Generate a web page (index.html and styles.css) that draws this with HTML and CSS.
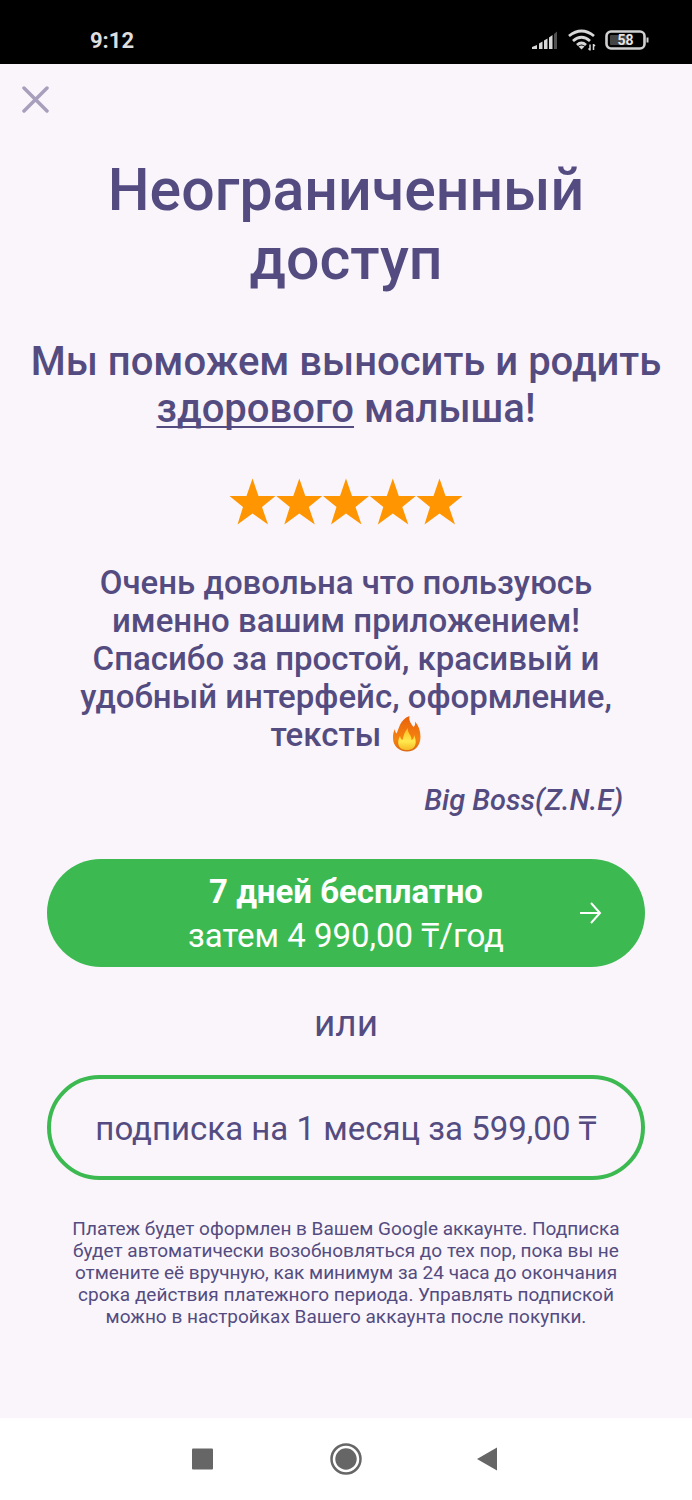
FILE: index.html
```html
<!DOCTYPE html>
<html lang="ru">
<head>
<meta charset="utf-8">
<meta name="viewport" content="width=device-width, initial-scale=1">
<title>Неограниченный доступ</title>
<link rel="stylesheet" href="styles.css">
</head>
<body>
<header class="status">
  <time class="clock">9:12</time>
  <div class="indicators">
    <svg width="28" height="20" viewBox="0 0 28 20" aria-hidden="true">
      <g fill="#d8d8d8"><path d="M1 19v-2l5-2v4zM8 13.500l3.500-2v7.500H8zM13 10.500l3.500-2V19H13zM18 7.500l3.500-2.500v14H18z"/></g>
      <path fill="#505050" d="M23 4l3-2.500V19h-3z"/>
    </svg>
    <svg width="28" height="22" viewBox="0 0 28 22" fill="none" stroke="#d8d8d8" stroke-width="2.800" aria-hidden="true">
      <path d="M1 7q12.500-10 25 0M5 12q8.500-7.500 17 0M9 16q4.500-4 9 0"/>
      <path fill="#d8d8d8" stroke="none" d="M10.500 17.500q3-2 6 0l-3 3z"/>
      <path stroke="#000" stroke-width="6" d="M23.500 14v8"/>
      <path stroke-width="1.500" d="M22 15.500v6M25.500 15v6M20.500 19.500l1.500 1.500M25.500 15.500l1.500 1.500"/>
    </svg>
    <svg class="battery" width="45" height="20" viewBox="0 0 45 20" role="img" aria-label="58%">
      <rect x="1.500" y="1.500" width="38" height="17" rx="4.500" fill="none" stroke="#d0d0d0" stroke-width="2.600"/>
      <rect x="5" y="5" width="18" height="10" rx="1" fill="#444"/>
      <path d="M41.500 7.500h2v5h-2z" fill="#d0d0d0"/>
      <text x="20.500" y="15" text-anchor="middle">58</text>
    </svg>
  </div>
</header>
<main class="paywall">
  <button class="close" type="button" aria-label="Закрыть">
    <svg width="27" height="27" viewBox="0 0 27 27" aria-hidden="true"><path d="M2 2l23 23M25 2L2 25" stroke="#a79fbc" stroke-width="3.500" stroke-linecap="round"/></svg>
  </button>
  <h1 class="title">Неограниченный<br>доступ</h1>
  <h2 class="subtitle">Мы поможем выносить и родить <u>здорового</u> малыша!</h2>
  <svg class="stars" width="234" height="48" viewBox="0 0 234 48" fill="#ff9500" role="img" aria-label="5 из 5">
    <defs><path id="star" d="M23.500 0.500l6 17.500h17L33 29l6 17.500-15.500-11-15 11L14 29 0.500 18h17z"/></defs>
    <use href="#star"/><use href="#star" x="46.800"/><use href="#star" x="93.500"/><use href="#star" x="140.300"/><use href="#star" x="187"/>
  </svg>
  <figure class="review">
    <blockquote class="quote">Очень довольна что пользуюсь<br>именно вашим приложением!<br>Спасибо за простой, красивый и<br>удобный интерфейс, оформление,<br>тексты
      <svg class="fire" width="30" height="36" viewBox="0 0 30 36" role="img" aria-label="огонь">
        <defs>
          <linearGradient id="flame" x1="0" y1="0" x2="0" y2="1"><stop offset="0" stop-color="#e8610c"/><stop offset=".65" stop-color="#f5830f"/><stop offset="1" stop-color="#d96a14"/></linearGradient>
          <linearGradient id="core" x1="0" y1="0" x2="0" y2="1"><stop offset="0" stop-color="#ffb91c"/><stop offset=".6" stop-color="#ffe94e"/><stop offset="1" stop-color="#f7ba25"/></linearGradient>
        </defs>
        <path fill="url(#flame)" d="M17.500 0c-1 4.500 1.500 7.500 4 11 1.500-1 2-3 1.500-5.500 3.500 4 5.500 9 5.500 15.500 0 8.500-5.500 14.500-13.500 14.500S1 30 1 22c0-4 .5-6.500 2-9 0 2 .5 3.500 1.500 4.500C7 13.500 7.500 3.500 17.500 0z"/>
        <path fill="url(#core)" d="M16 12c-1 5 4 7 3.500 12 2-.5 2.500-2.500 2.500-5 3 6 3 15-7 15S5 25 8 20c.5 2 1 3 2.500 4 1-4 2-8.500 5.500-12z"/>
      </svg></blockquote>
    <figcaption class="author">Big Boss(Z.N.E)</figcaption>
  </figure>
  <div class="plans">
    <button class="plan plan-year" type="button">
      <span><strong>7 дней бесплатно</strong><br>затем 4 990,00 ₸/год</span>
      <svg class="arrow" width="22" height="22" viewBox="0 0 22 22" fill="none" stroke="#fff" stroke-width="2" aria-hidden="true"><path d="M0 11h20M11 1l9 10-9 10"/></svg>
    </button>
    <p class="or">или</p>
    <button class="plan plan-month" type="button">подписка на 1 месяц за 599,00 ₸</button>
  </div>
  <p class="legal">Платеж будет оформлен в Вашем Google аккаунте. Подписка будет автоматически возобновляться до тех пор, пока вы не отмените её вручную, как минимум за 24 часа до окончания срока действия платежного периода. Управлять подпиской можно в настройках Вашего аккаунта после покупки.</p>
</main>
<nav class="system">
  <button type="button" aria-label="Недавние"><svg width="32" height="32" viewBox="0 0 32 32"><rect x="6" y="5.500" width="21" height="21" rx="1" fill="#666"/></svg></button>
  <button type="button" aria-label="Домой"><svg width="32" height="32" viewBox="0 0 32 32"><circle cx="16" cy="16" r="14.500" fill="none" stroke="#666" stroke-width="2.500"/><circle cx="16" cy="16" r="10.700" fill="#666"/></svg></button>
  <button type="button" aria-label="Назад"><svg width="32" height="32" viewBox="0 0 32 32"><path d="M3 16L23 4.500v23z" fill="#666"/></svg></button>
</nav>
</body>
</html>
```
FILE: styles.css
```css
* {
  box-sizing: border-box;
}

body {
  margin: 0;
  min-height: 100vh;
  display: flex;
  flex-direction: column;
  background: #f9f5fb;
  color: #544c80;
  font-family: Roboto, "Noto Sans", sans-serif;
}

h1, h2, p, figure, blockquote {
  margin: 0;
  font-weight: 500;
}

button {
  padding: 0;
  border: 0;
  background: none;
  color: inherit;
  font: inherit;
  cursor: pointer;
}

svg {
  display: block;
}

.status {
  display: flex;
  align-items: center;
  justify-content: space-between;
  height: 64px;
  padding: 16px 42px 0 90px;
  background: #000;
  color: #dedede;
}

.clock {
  font-size: 22px;
  font-weight: 700;
}

.indicators {
  display: flex;
  align-items: center;
  gap: 9px;
}

.battery text {
  fill: #e4e4e4;
  font-size: 14px;
  font-weight: 700;
}

.paywall {
  flex: 1;
  display: flex;
  flex-direction: column;
  align-items: center;
  padding: 22px 22px 24px;
  text-align: center;
}

.close {
  align-self: flex-start;
}

.title {
  margin-top: 42px;
  font-size: 59px;
  line-height: 69px;
}

.subtitle {
  margin-top: 45px;
  font-size: 40px;
  line-height: 47px;
}

.subtitle u {
  text-decoration-thickness: 2px;
  text-underline-offset: 4px;
  text-decoration-skip-ink: none;
}

.stars {
  margin-top: 46px;
}

.review {
  align-self: stretch;
  margin-top: 38px;
}

.quote {
  font-size: 33px;
  line-height: 38px;
}

.fire {
  display: inline-block;
  margin-left: 2px;
  vertical-align: -6px;
}

.author {
  margin-top: 29px;
  padding-right: 47px;
  font-size: 29px;
  font-style: italic;
  font-weight: 500;
  line-height: 34px;
  text-align: right;
}

.plans {
  align-self: stretch;
  margin-top: 42px;
  padding: 0 25px;
}

.plan {
  display: flex;
  align-items: center;
  justify-content: center;
  position: relative;
  width: 100%;
  border-radius: 54px;
  font-size: 33px;
  line-height: 44px;
}

.plan-year {
  min-height: 108px;
  padding-top: 2px;
  background: #3cba51;
  color: #fff;
}

.arrow {
  position: absolute;
  top: 43px;
  right: 43px;
}

.or {
  margin: 36px 0 30px;
  font-size: 37px;
  font-weight: 400;
  line-height: 42px;
}

.plan-month {
  min-height: 105px;
  padding-top: 2px;
  border: 4px solid #3cba51;
}

.legal {
  margin-top: 38px;
  padding: 0 46px;
  font-size: 19px;
  font-weight: 400;
  line-height: 22px;
}

.system {
  display: flex;
  align-items: center;
  justify-content: center;
  gap: 112px;
  height: 82px;
  background: #fff;
}
```
